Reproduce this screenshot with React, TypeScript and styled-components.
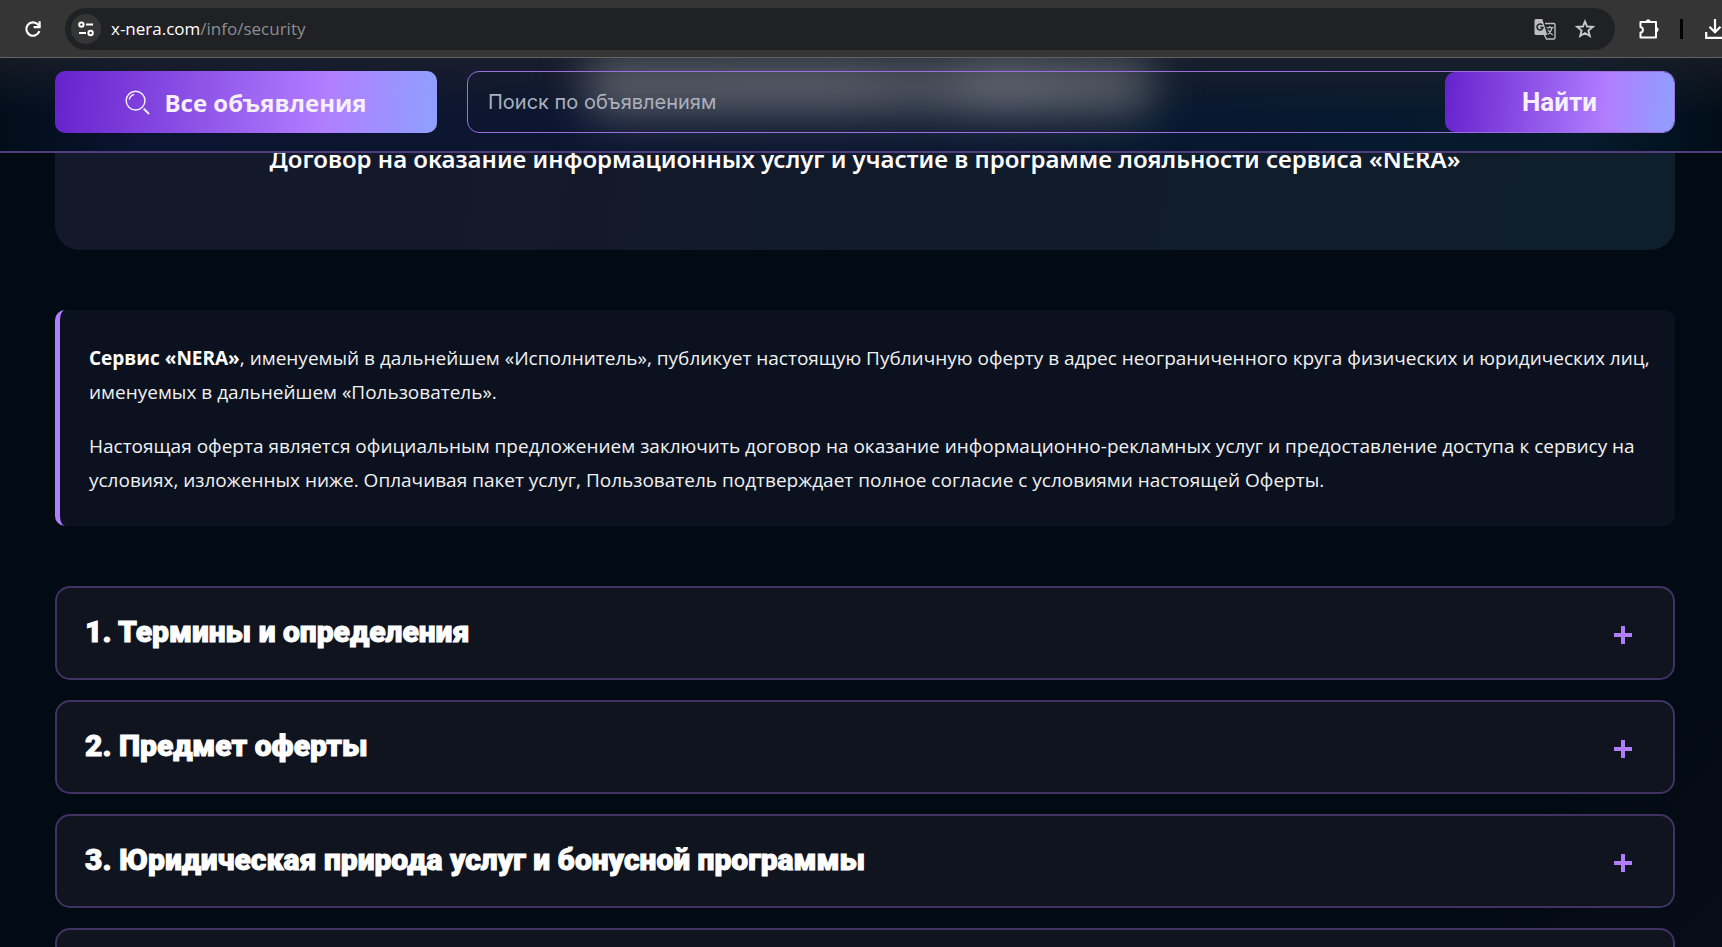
import React, { useState } from "react";
import styled, { createGlobalStyle } from "styled-components";

const Global = createGlobalStyle`
  * { box-sizing: border-box; }
  html, body { margin: 0; height: 100%; }
  #root { height: 100%; }
  body {
    overflow: hidden;
    background: #020a13;
    color: #fff;
    font-family: "Open Sans", "Noto Sans", sans-serif;
  }
  h1, h2, h3, p { margin: 0; }
  button, input { font: inherit; color: inherit; border: 0; background: none; padding: 0; }
`;

const Shell = styled.div`
  height: 100%;
  display: flex;
  flex-direction: column;
  overflow: hidden;
`;

const BrowserBar = styled.div`
  flex: none;
  height: 58px;
  display: flex;
  align-items: center;
  background: #353535;
  border-bottom: 1px solid #636366;
  overflow: hidden;
`;

const ToolButton = styled.button`
  flex: none;
  width: 65px;
  height: 42px;
  display: grid;
  place-items: center;
`;

const AddressBar = styled.form`
  flex: 1;
  min-width: 0;
  height: 42px;
  padding: 0 15px 0 6px;
  display: flex;
  align-items: center;
  gap: 10px;
  border-radius: 21px;
  background: #202124;
`;

const SiteInfo = styled.button`
  flex: none;
  width: 30px;
  height: 30px;
  display: grid;
  place-items: center;
  border-radius: 50%;
  background: #353535;
`;

const Url = styled.a`
  flex: 1;
  color: #fff;
  font-size: 17px;
  line-height: 24px;
  text-decoration: none;
  span { color: #8b8d90; }
`;

const AddressAction = styled.button`
  flex: none;
  width: 30px;
  height: 30px;
  display: grid;
  place-items: center;
`;

const BarActions = styled.div`
  flex: none;
  width: 107px;
  display: flex;
  align-items: center;
  overflow: hidden;
`;

const Extensions = styled(ToolButton)`
  width: 65px;
  padding-left: 3px;
`;

const BarDivider = styled.span`
  flex: none;
  width: 3px;
  height: 20px;
  margin-right: 22px;
  background: #000;
`;

const Downloads = styled.button`
  flex: none;
  display: grid;
`;

const Site = styled.div`
  flex: 1;
  min-height: 0;
  position: relative;
  overflow: hidden;
  background: linear-gradient(135deg, #020a13 0%, #020a13 88%, #060d18 100%);
`;

const Header = styled.header`
  position: absolute;
  z-index: 2;
  inset: 0 0 auto;
  height: 95px;
  padding: 13px 47px 0 55px;
  display: flex;
  align-items: flex-start;
  gap: 30px;
  overflow: hidden;
  border-bottom: 2px solid #503d7b;
  background:
    linear-gradient(180deg, rgba(34, 34, 42, 0.6) 0%, rgba(34, 34, 42, 0) 60%),
    linear-gradient(90deg, #000d19 0%, #0b1430 8%, #0c1730 40%, #08182f 70%, #061b2d 92%, #010d18 100%);
`;

const Glow = styled.div`
  position: absolute;
  z-index: -1;
  top: 0;
  left: 34%;
  width: 33%;
  height: 56px;
  border-radius: 20px;
  background: linear-gradient(90deg, #5b5f69 0%, #5b606a 45%, #4d535d 60%, #686c76 72%, #50565f 100%);
  filter: blur(22px);
`;

const accent = "linear-gradient(95deg, #6622cc 0%, #b17dff 70%, #8fa0ff 100%)";

const AllAds = styled.button`
  flex: none;
  width: 382px;
  height: 62px;
  display: flex;
  align-items: center;
  justify-content: center;
  gap: 14px;
  border-radius: 10px;
  background: ${accent};
  color: #f5efff;
  font-size: 24px;
  font-weight: 700;
`;

const Search = styled.form`
  flex: 1;
  min-width: 0;
  height: 62px;
  display: flex;
  border: 1px solid #9b6fe0;
  border-radius: 12px;
  overflow: hidden;
`;

const SearchInput = styled.input`
  flex: 1;
  min-width: 0;
  padding: 0 20px;
  font-family: Inter, sans-serif;
  font-size: 20px;
  outline: 0;
  &::placeholder { color: #abb0bd; opacity: 1; }
`;

const FindButton = styled.button`
  flex: none;
  width: 229px;
  border-radius: 10px;
  background: ${accent};
  color: #f5efff;
  font-family: Roboto, sans-serif;
  font-size: 26px;
  font-weight: 700;
`;

const Main = styled.main`
  padding: 0 47px 0 55px;
  display: flex;
  flex-direction: column;
  gap: 60px;
`;

const Hero = styled.section`
  height: 192px;
  padding-top: 84px;
  border-radius: 0 0 25px 25px;
  background: linear-gradient(100deg, #14182b 0%, #14182b 25%, #101c2b 60%, #0f1e2c 100%);
  text-align: center;
`;

const Subtitle = styled.h1`
  font-size: 24px;
  line-height: 34px;
  font-weight: 600;
  font-family: "Noto Sans", "Open Sans", sans-serif;
  white-space: nowrap;
`;

const Intro = styled.section`
  padding: 31px 20px 29px 29px;
  display: grid;
  gap: 20px;
  border-left: 5px solid #b17dff;
  border-radius: 10px;
  background: #0c1120;
  color: #f0f1f2;
  font-size: 19px;
  line-height: 34px;
  strong { color: #fff; }
`;

const Sections = styled.div`
  display: grid;
  gap: 20px;
`;

const Card = styled.article`
  border: 2px solid #403263;
  border-radius: 15px;
  background: #0f141f;
`;

const CardToggle = styled.button`
  width: 100%;
  height: 90px;
  padding: 0 41px 4px 28px;
  display: flex;
  align-items: center;
  justify-content: space-between;
  color: #fff;
  font-family: Roboto, sans-serif;
  font-size: 30px;
  font-weight: 900;
  -webkit-text-stroke: 1px #fff;
  text-align: left;
`;

const PlusIcon = styled.svg`
  flex: none;
  margin-top: 8px;
`;

const sections = [
  "1. Термины и определения",
  "2. Предмет оферты",
  "3. Юридическая природа услуг и бонусной программы",
  "",
];

function Section({ title }: { title: string }) {
  const [open, setOpen] = useState(false);
  return (
    <Card>
      <h2>
        <CardToggle type="button" aria-expanded={open} onClick={() => setOpen(!open)}>
          <span>{title}</span>
          <PlusIcon width="18" height="18" viewBox="0 0 18 18" aria-hidden="true">
            <path d={open ? "M0 9H18" : "M0 9H18M9 0V18"} stroke="#b17dff" strokeWidth="4" />
          </PlusIcon>
        </CardToggle>
      </h2>
    </Card>
  );
}

export default function App() {
  return (
    <Shell>
      <Global />
      <BrowserBar>
        <ToolButton aria-label="Обновить">
          <svg width="18" height="18" viewBox="0 0 18 18" fill="none" stroke="#fff" strokeWidth="2.200">
            <path d="M15.400 11.200A6.700 6.700 0 1 1 14 4.500L15.600 6.400" />
            <path d="M15.600 1.200V7.100H9.600" />
          </svg>
        </ToolButton>
        <AddressBar onSubmit={(e) => e.preventDefault()}>
          <SiteInfo type="button" aria-label="Сведения о сайте">
            <svg width="16" height="16" viewBox="0 0 16 16" fill="none" stroke="#fff" strokeWidth="2">
              <circle cx="3.400" cy="3.600" r="2.200" />
              <path d="M8 3.600H15M1 12H8" />
              <circle cx="12.600" cy="12" r="2.200" />
            </svg>
          </SiteInfo>
          <Url href="#security">x-nera.com<span>/info/security</span></Url>
          <AddressAction type="button" aria-label="Перевести страницу">
            <svg width="22" height="22" viewBox="0 0 22 22">
              <path d="M11 5.500H20A1.200 1.200 0 0 1 21 6.600V19.800A1.200 1.200 0 0 1 20 21H12.500L10.500 17" fill="none" stroke="#bdbdbd" strokeWidth="1.400" />
              <path d="M2 1H8.300L13.300 17H2A1.500 1.500 0 0 1 .5 15.500V2.500A1.500 1.500 0 0 1 2 1Z" fill="#bdbdbd" />
              <path d="M8.300 7A3 3 0 1 0 9 9.400H6.300" fill="none" stroke="#202124" strokeWidth="1.500" />
              <path d="M12.500 9.600H19.500M15.800 8V9.600M18 9.600C17.500 12.500 15.500 15 13.800 16.200M13.800 11.500C15 14 17 16 18.800 17" fill="none" stroke="#bdbdbd" strokeWidth="1.200" />
            </svg>
          </AddressAction>
          <AddressAction type="button" aria-label="Добавить в закладки">
            <svg width="20" height="20" viewBox="0 0 20 20" fill="none" stroke="#c8c8c8" strokeWidth="1.900">
              <path d="M10 2.500L12.100 7.500L17.700 7.900L13.400 11.500L14.800 17L10 14L5.200 17L6.600 11.500L2.300 7.900L7.900 7.500Z" />
            </svg>
          </AddressAction>
        </AddressBar>
        <BarActions>
          <Extensions aria-label="Расширения">
            <svg width="22" height="22" viewBox="0 0 22 22" fill="none" stroke="#fff" strokeWidth="2" strokeLinejoin="round">
              <path d="M2.500 4H18V19.500H2.500V14.800A3 3 0 0 0 2.500 8.900Z" />
              <path d="M8 4A2.200 2.200 0 0 1 12.400 4ZM18 9.400A2.200 2.200 0 0 1 18 13.800Z" fill="#fff" strokeWidth="1" />
            </svg>
          </Extensions>
          <BarDivider />
          <Downloads aria-label="Загрузки">
            <svg width="20" height="22" viewBox="0 0 20 22" fill="none" stroke="#fff" strokeWidth="2.200">
              <path d="M10 1V14M4.500 8.800L10 14.300L15.500 8.800M1.200 14V19.800H18.800V14" />
            </svg>
          </Downloads>
        </BarActions>
      </BrowserBar>
      <Site>
        <Header>
          <Glow />
          <AllAds type="button">
            <svg width="25" height="25" viewBox="0 0 26 26" fill="none" stroke="#f5efff" strokeWidth="1.500">
              <circle cx="11" cy="11" r="9.800" />
              <path d="M4.500 10A6.500 6.500 0 0 1 9.500 4.600" />
              <path d="M19.500 19.500L25 25" strokeWidth="2" />
            </svg>
            Все объявления
          </AllAds>
          <Search role="search" onSubmit={(e) => e.preventDefault()}>
            <SearchInput aria-label="Поиск по объявлениям" placeholder="Поиск по объявлениям" />
            <FindButton type="submit">Найти</FindButton>
          </Search>
        </Header>
        <Main>
          <Hero>
            <Subtitle>Договор на оказание информационных услуг и участие в программе лояльности сервиса «NERA»</Subtitle>
          </Hero>
          <Intro>
            <p>
              <strong>Сервис «NERA»</strong>, именуемый в дальнейшем «Исполнитель», публикует настоящую Публичную оферту в адрес неограниченного круга физических и юридических лиц, именуемых в дальнейшем «Пользователь».
            </p>
            <p>
              Настоящая оферта является официальным предложением заключить договор на оказание информационно-рекламных услуг и предоставление доступа к сервису на условиях, изложенных ниже. Оплачивая пакет услуг, Пользователь подтверждает полное согласие с условиями настоящей Оферты.
            </p>
          </Intro>
          <Sections>
            {sections.map((title) => <Section key={title} title={title} />)}
          </Sections>
        </Main>
      </Site>
    </Shell>
  );
}
